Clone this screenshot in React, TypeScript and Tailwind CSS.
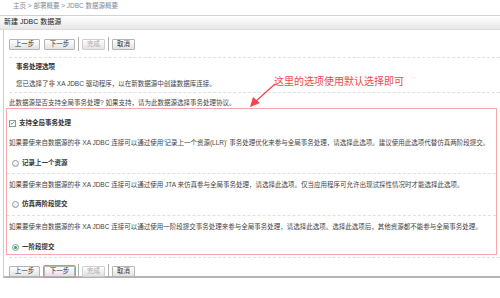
import clsx from "clsx"

const font = "font-['Liberation_Sans','Noto_Sans_CJK_SC',sans-serif]"

function Btn({ label, w, disabled, highlight }: { label: string; w: string; disabled?: boolean; highlight?: boolean }) {
  return (
    <div
      className={clsx(
        "flex h-[11px] items-center justify-center rounded-[1px] border bg-gradient-to-b from-white to-[#e2e2e2] text-[6.5px] leading-none",
        w,
        disabled ? "border-[#cfcfcf] text-[#aaaaaa]" : "border-[#b5b5b5] text-[#333]",
        highlight && "outline outline-1 outline-[#f27f7f]"
      )}
    >
      {label}
    </div>
  )
}

function Sep() {
  return <div className="ml-[3px] h-[14px] w-[1px] bg-[#b0b0b0]" />
}

function ButtonRow({ highlightNext }: { highlightNext?: boolean }) {
  return (
    <div className="flex items-center pl-[5px]">
      <Btn label="上一步" w="w-[31px]" />
      <div className="ml-[4px]">
        <Btn label="下一步" w="w-[31px]" highlight={highlightNext} />
      </div>
      <Sep />
      <div className="ml-[3px]">
        <Btn label="完成" w="w-[23px]" disabled />
      </div>
      <Sep />
      <div className="ml-[3px]">
        <Btn label="取消" w="w-[23px]" />
      </div>
    </div>
  )
}

function Radio({ checked }: { checked?: boolean }) {
  return (
    <span className="flex h-[7px] w-[7px] items-center justify-center rounded-full border border-[#8a9aa8] bg-gradient-to-b from-white to-[#e4e8ec]">
      {checked && <span className="h-[3px] w-[3px] rounded-full bg-[#3aa83a]" />}
    </span>
  )
}

function Dashed({ className }: { className?: string }) {
  return <div className={clsx("border-t border-dashed border-[#e0e0e0]", className)} />
}

export default function App() {
  return (
    <div className={clsx("relative h-[298px] w-[500px] overflow-hidden bg-white text-[#333]", font)}>
      {/* パンくず */}
      <div className="h-[15px] pl-[13px] pt-[2px] text-[6.5px] leading-[8px] text-[#7d8c99]">
        主页 &gt; 部署概要 &gt; JDBC 数据源概要
      </div>

      {/* タイトルバー */}
      <div className="flex h-[15px] items-center border-y border-t-[#d2d2d2] border-b-[#dcdcdc] bg-gradient-to-b from-white to-[#e7e7e7] pl-[4px] text-[7px] text-[#222]">
        新建 JDBC 数据源
      </div>

      <div className="ml-[3px] h-[248px] border-b-2 border-l border-b-[#b4b4b4] border-l-[#cfcfcf] pt-[7px]">
        <ButtonRow />
        <Dashed className="ml-[5px] mt-[6px]" />

        <div className="pl-[12px] pt-[5px] text-[6.5px] font-bold leading-[8px]">事务处理选项</div>
        <div className="pl-[12px] pt-[9px] text-[6.5px] leading-[8px] text-[#444]">
          您已选择了非 XA JDBC 驱动程序，以在新数据源中创建数据库连接。
        </div>
        <Dashed className="ml-[5px] mt-[4px]" />
        <div className="pl-[5px] pt-[6px] text-[6.5px] leading-[8px] text-[#444]">
          此数据源是否支持全局事务处理? 如果支持，请为此数据源选择事务处理协议。
        </div>

        {/* 選択肢の枠 */}
        <div className="ml-[2px] mt-[1px] h-[147px] w-[491px] overflow-hidden whitespace-nowrap border-[1.5px] border-[#f6a9a9] text-[6.5px] leading-[8px]">
          <div className="flex items-center gap-[3px] pl-[2px] pt-[10px]">
            <span className="flex h-[7px] w-[7px] items-center justify-center border border-[#8a9aa8] bg-white">
              <svg viewBox="0 0 8 8" className="h-[6px] w-[6px]">
                <path d="M1 4 L3.2 6 L7 1.5" fill="none" stroke="#2f9e3a" strokeWidth={1.4} />
              </svg>
            </span>
            <span className="font-bold">支持全局事务处理</span>
          </div>
          <div className="pl-[2px] pt-[12px] text-[#444]">
            如果要使来自数据源的非 XA JDBC 连接可以通过使用'记录上一个资源(LLR)' 事务处理优化来参与全局事务处理，请选择此选项。建议使用此选项代替仿真两阶段提交。
          </div>
          <div className="flex items-center gap-[3px] pl-[5px] pt-[12px]">
            <Radio />
            <span className="font-bold">记录上一个资源</span>
          </div>
          <Dashed className="mt-[6px]" />
          <div className="pl-[2px] pt-[7px] text-[#444]">
            如果要使来自数据源的非 XA JDBC 连接可以通过使用 JTA 来仿真参与全局事务处理，请选择此选项。仅当应用程序可允许出现试探性情况时才能选择此选项。
          </div>
          <div className="flex items-center gap-[3px] pl-[5px] pt-[11px]">
            <Radio />
            <span className="font-bold">仿真两阶段提交</span>
          </div>
          <Dashed className="mt-[7px]" />
          <div className="pl-[2px] pt-[7px] text-[#444]">
            如果要使来自数据源的非 XA JDBC 连接可以通过使用一阶段提交事务处理来参与全局事务处理，请选择此选项。选择此选项后，其他资源都不能参与全局事务处理。
          </div>
          <div className="flex items-center gap-[3px] pl-[5px] pt-[12px]">
            <Radio checked />
            <span className="font-bold">一阶段提交</span>
          </div>
        </div>

        <Dashed className="ml-[5px] mt-[2px]" />
        <div className="pt-[6px]">
          <ButtonRow highlightNext />
        </div>
      </div>

      {/* 注釈 */}
      <div className="absolute left-[274px] top-[76px] text-[10px] leading-[12px] text-[#f04848]">
        这里的选项使用默认选择即可
      </div>
      <svg className="absolute left-[247px] top-[81px]" width="32" height="30" viewBox="0 0 32 30">
        <line x1="28" y1="3" x2="8" y2="21" stroke="#f04848" strokeWidth={1.3} />
        <polygon points="3,26 6,16 13,22" fill="#f04848" />
      </svg>
    </div>
  )
}
